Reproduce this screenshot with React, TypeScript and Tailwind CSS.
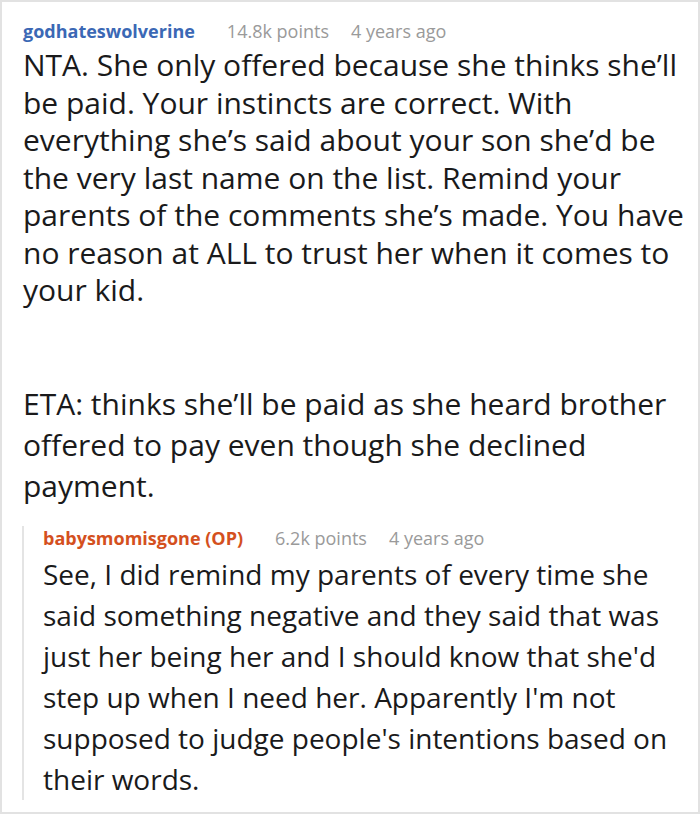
export default function App() {
  return (
    <div className="w-[700px] h-[814px] bg-white border-2 border-[#e2e2e2] overflow-hidden font-['Open_Sans','Noto_Sans',sans-serif] text-[#1a1a1b]">
      <div className="pl-[21px] pr-2 pt-[17px]">
        <div className="flex items-baseline gap-[32px] text-[18px] leading-[24px]">
          <span className="font-bold text-[#3b68b5]">godhateswolverine</span>
          <span className="flex gap-[22px] text-[#9a9a9a]">
            <span>14.8k points</span>
            <span>4 years ago</span>
          </span>
        </div>
        <div className="text-[30px] mt-[3px]">
          <p className="leading-[37.5px]">
            NTA. She only offered because she thinks she’ll be paid. Your instincts are correct. With everything she’s said about your son she’d be the very last name on the list. Remind your parents of the comments she’s made. You have no reason at ALL to trust her when it comes to your kid.
          </p>
          <p className="mt-[74px] leading-[41px]">
            ETA: thinks she’ll be paid as she heard brother offered to pay even though she declined payment.
          </p>
        </div>

        <div className="mt-[20px] ml-[-1px] border-l-2 border-[#e4e4e4] pl-[19px]">
          <div className="flex items-baseline gap-[32px] text-[18px] leading-[24px]">
            <span className="font-bold text-[#d4501e]">babysmomisgone (OP)</span>
            <span className="flex gap-[22px] text-[#9a9a9a]">
              <span>6.2k points</span>
              <span>4 years ago</span>
            </span>
          </div>
          <p className="text-[28px] leading-[41px] mt-[4px]">
            See, I did remind my parents of every time she said something negative and they said that was just her being her and I should know that she'd step up when I need her. Apparently I'm not supposed to judge people's intentions based on their words.
          </p>
        </div>
      </div>
    </div>
  );
}
